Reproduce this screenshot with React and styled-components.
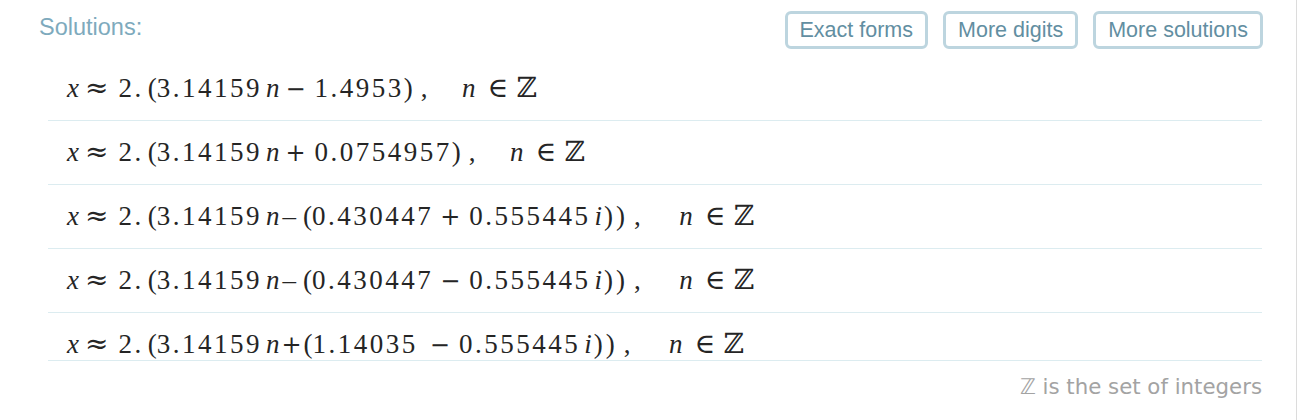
import React from 'react';
import styled, { createGlobalStyle } from 'styled-components';

const GlobalStyle = createGlobalStyle`
  html, body {
    margin: 0;
    padding: 0;
    background: #fff;
  }
  body {
    font-family: "Liberation Sans", Arial, sans-serif;
  }
`;

const Panel = styled.div`
  box-sizing: border-box;
  width: 1297px;
  height: 420px;
  padding: 11px 34px 0 39px;
  border-right: 1px solid #dcdcdc;
`;

const Header = styled.div`
  display: flex;
  justify-content: space-between;
  align-items: flex-start;
  height: 38px;
`;

const Title = styled.div`
  margin-top: 3px;
  font-size: 23.5px;
  line-height: 26px;
  color: #7eaabd;
`;

const ButtonGroup = styled.div`
  display: flex;
  gap: 15px;
  margin-right: -1px;
`;

const Button = styled.button`
  box-sizing: border-box;
  height: 38px;
  padding: 0 12px;
  border: 3px solid #bdd5df;
  border-radius: 6px;
  background: #fff;
  font-family: "Liberation Sans", Arial, sans-serif;
  font-size: 21.5px;
  color: #628ea1;
  cursor: pointer;
`;

const List = styled.div`
  margin: 8px 0 0 9px;
`;

const Row = styled.div`
  box-sizing: border-box;
  height: ${p => (p.$short ? 48 : 64)}px;
  padding: 17px 0 0 19px;
  border-bottom: 1px solid #dcecf0;
`;

const Formula = styled.div`
  font-family: "Liberation Serif", "DejaVu Serif", serif;
  font-size: 27px;
  line-height: 28px;
  letter-spacing: 2.5px;
  color: #252525;
  white-space: nowrap;
`;

const V = styled.i`
  font-style: italic;
  letter-spacing: 0;
`;

const P = styled.span`
  letter-spacing: 0;
`;

const Op = styled.span`
  font-family: "DejaVu Serif", serif;
  font-size: ${p => p.$size || 24}px;
  letter-spacing: 0;
`;

const G = styled.span`
  display: inline-block;
  width: ${p => p.$w}px;
`;

const Note = styled.div`
  margin-top: 14px;
  text-align: right;
  font-family: "DejaVu Sans", sans-serif;
  font-size: 21.3px;
  line-height: 24px;
  color: #a3a3a3;
`;

const head = (
  <>
    <V>x</V><G $w={6} /><Op $size={28}>≈</Op><G $w={10} />2.<G $w={4} /><P>(</P>3.14159<G $w={4} /><V>n</V>
  </>
);

const tail = (w = 36) => (
  <>
    <G $w={w} /><V>n</V><G $w={12} /><Op $size={28}>∈</Op><G $w={8} /><Op $size={28}>ℤ</Op>
  </>
);

const close = (
  <>
    <G $w={4} /><V>i</V><G $w={2} /><P>)</P><G $w={3} /><P>)</P><G $w={9} />,
  </>
);

const solutions = [
  <>{head}<G $w={6} /><Op>−</Op><G $w={9} />1.4953<P>)</P><G $w={8} />,{tail(32)}</>,
  <>{head}<G $w={6} /><Op>+</Op><G $w={9} />0.0754957<P>)</P><G $w={8} />,{tail(32)}</>,
  <>{head}<G $w={3} /><P>–</P><G $w={7} /><P>(</P>0.430447<G $w={7} /><Op>+</Op><G $w={9} />0.555445{close}{tail()}</>,
  <>{head}<G $w={3} /><P>–</P><G $w={7} /><P>(</P>0.430447<G $w={7} /><Op>−</Op><G $w={9} />0.555445{close}{tail()}</>,
  <>{head}<G $w={2} /><Op>+</Op><G $w={2} /><P>(</P>1.14035<G $w={12} /><Op>−</Op><G $w={9} />0.555445{close}{tail()}</>,
];

export default function App() {
  return (
    <Panel>
      <GlobalStyle />
      <Header>
        <Title>Solutions:</Title>
        <ButtonGroup>
          <Button type="button">Exact forms</Button>
          <Button type="button">More digits</Button>
          <Button type="button">More solutions</Button>
        </ButtonGroup>
      </Header>
      <List>
        {solutions.map((s, i) => (
          <Row key={i} $short={i === solutions.length - 1}>
            <Formula>{s}</Formula>
          </Row>
        ))}
      </List>
      <Note>
        <span>ℤ</span> is the set of integers
      </Note>
    </Panel>
  );
}
